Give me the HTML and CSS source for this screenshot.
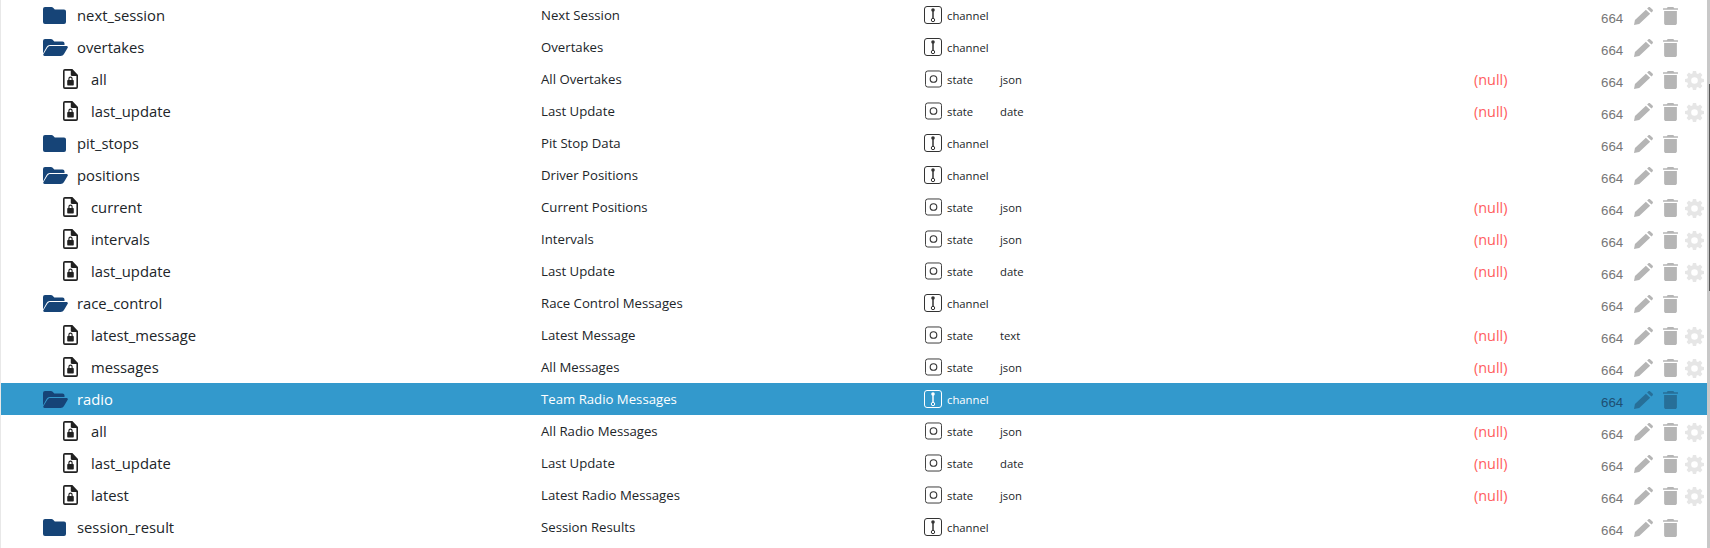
FILE: index.html
```html
<!DOCTYPE html>
<html lang="en">
<head>
  <meta charset="UTF-8" />
  <title>Objects</title>
  <link rel="stylesheet" href="styles.css">
</head>
<body>
  <svg class="defs" width="0" height="0">
    <symbol id="i-folder" viewBox="0 0 23 17"><path d="M2 0h6.500c.5 0 1 .2 1.400.6L11.800 2.500H21A2 2 0 0 1 23 4.500V15A2 2 0 0 1 21 17H2A2 2 0 0 1 0 15V2A2 2 0 0 1 2 0z"/></symbol>
    <symbol id="i-open" viewBox="0 0 25 17"><path d="M0 14.500V2A2 2 0 0 1 2 0h6c.5 0 1 .2 1.400.6L11.300 2.500H19.500A2 2 0 0 1 21.500 4.500V6H7C5.500 6 4.300 6.700 3.600 8z"/><path d="M1.500 17C.5 17-.1 16 .4 15.200L4.500 8.500C5.100 7.600 6 7 7.100 7H23.500C24.500 7 25.200 8 24.700 8.800L21 15C20.300 16.200 19 17 17.600 17z"/></symbol>
    <symbol id="i-file" viewBox="0 0 16 20" preserveAspectRatio="none"><path fill-rule="evenodd" d="M2 0h8l6 6v12a2 2 0 0 1-2 2H2a2 2 0 0 1-2-2V2a2 2 0 0 1 2-2zM2 1.700c-.2 0-.3.100-.3.300v16c0 .2.100.3.300.3h12c.2 0 .3-.1.300-.3V7h-4.800C8.700 7 8.300 6.500 8.300 5.800V1.700z"/><path fill-rule="evenodd" d="M5.700 11V9.800a2.300 2.300 0 0 1 4.600 0V11h.5c.4 0 .7.300.7.700v4c0 .4-.3.700-.7.700H5.200c-.4 0-.7-.3-.7-.7v-4c0-.4.300-.7.700-.7zm1.200 0h2.200V9.800a1.100 1.100 0 0 0-2.200 0z"/></symbol>
    <symbol id="i-channel" viewBox="0 0 18 18"><rect x=".5" y=".5" width="17" height="17" rx="2.500" fill="none" stroke="currentColor"/><circle cx="9" cy="4" r="1.800" fill="currentColor"/><path d="M9 5v7.500" stroke="currentColor" stroke-width="1.500"/><circle cx="9" cy="14" r="1.700" fill="none" stroke="currentColor"/></symbol>
    <symbol id="i-state" viewBox="0 0 18 18"><rect x=".5" y=".5" width="17" height="17" rx="2.500" fill="none" stroke="currentColor"/><circle cx="9" cy="9" r="3.500" fill="none" stroke="currentColor" stroke-width="1.200"/></symbol>
    <symbol id="i-pen" viewBox="0 0 20 20" preserveAspectRatio="none"><path d="M0 20l1-5.500L12.500 3l4.500 4.500L5.500 19zM13.800 1.700L15 .5c.6-.6 1.500-.6 2.100 0l2.400 2.400c.6.600.6 1.500 0 2.100l-1.200 1.200z"/></symbol>
    <symbol id="i-trash" viewBox="0 0 16 20" preserveAspectRatio="none"><path d="M5 0h6l1 1.500h3.500c.3 0 .5.200.5.500v1H0V2c0-.3.200-.5.500-.5H4zM1.200 4.500h13.600V18c0 1.100-.9 2-2 2H3.200c-1.100 0-2-.9-2-2z"/></symbol>
    <symbol id="i-gear" viewBox="0 0 20 20" preserveAspectRatio="none"><path fill-rule="evenodd" d="M8.300 0h3.400l.5 2.600 1.500.6 2.200-1.500 2.400 2.400-1.500 2.200.6 1.500 2.600.5v3.400l-2.600.5-.6 1.500 1.500 2.200-2.400 2.400-2.200-1.500-1.500.6-.5 2.600H8.300l-.5-2.600-1.500-.6-2.200 1.500-2.400-2.400 1.500-2.200-.6-1.500L0 11.700V8.300l2.600-.5.6-1.500-1.500-2.200 2.400-2.400 2.200 1.500 1.500-.6zM10 6.500a3.500 3.500 0 1 0 0 7 3.500 3.500 0 0 0 0-7z"/></symbol>
  </svg>

  <div class="tree">
    <div class="row">
      <div class="name"><svg class="ico-folder"><use href="#i-folder"/></svg>next_session</div>
      <div class="title">Next Session</div>
      <div class="kind"><svg class="ico-type"><use href="#i-channel"/></svg>channel</div>
      <div class="dtype"></div><div class="val"></div><div class="acl">664</div>
      <div class="btns"><svg class="ico-pen"><use href="#i-pen"/></svg><svg class="ico-trash"><use href="#i-trash"/></svg></div>
    </div>
    <div class="row">
      <div class="name"><svg class="ico-open"><use href="#i-open"/></svg>overtakes</div>
      <div class="title">Overtakes</div>
      <div class="kind"><svg class="ico-type"><use href="#i-channel"/></svg>channel</div>
      <div class="dtype"></div><div class="val"></div><div class="acl">664</div>
      <div class="btns"><svg class="ico-pen"><use href="#i-pen"/></svg><svg class="ico-trash"><use href="#i-trash"/></svg></div>
    </div>
    <div class="row state">
      <div class="name"><svg class="ico-file"><use href="#i-file"/></svg>all</div>
      <div class="title">All Overtakes</div>
      <div class="kind"><svg class="ico-type"><use href="#i-state"/></svg>state</div>
      <div class="dtype">json</div><div class="val">(null)</div><div class="acl">664</div>
      <div class="btns"><svg class="ico-pen"><use href="#i-pen"/></svg><svg class="ico-trash"><use href="#i-trash"/></svg><svg class="ico-gear"><use href="#i-gear"/></svg></div>
    </div>
    <div class="row state">
      <div class="name"><svg class="ico-file"><use href="#i-file"/></svg>last_update</div>
      <div class="title">Last Update</div>
      <div class="kind"><svg class="ico-type"><use href="#i-state"/></svg>state</div>
      <div class="dtype">date</div><div class="val">(null)</div><div class="acl">664</div>
      <div class="btns"><svg class="ico-pen"><use href="#i-pen"/></svg><svg class="ico-trash"><use href="#i-trash"/></svg><svg class="ico-gear"><use href="#i-gear"/></svg></div>
    </div>
    <div class="row">
      <div class="name"><svg class="ico-folder"><use href="#i-folder"/></svg>pit_stops</div>
      <div class="title">Pit Stop Data</div>
      <div class="kind"><svg class="ico-type"><use href="#i-channel"/></svg>channel</div>
      <div class="dtype"></div><div class="val"></div><div class="acl">664</div>
      <div class="btns"><svg class="ico-pen"><use href="#i-pen"/></svg><svg class="ico-trash"><use href="#i-trash"/></svg></div>
    </div>
    <div class="row">
      <div class="name"><svg class="ico-open"><use href="#i-open"/></svg>positions</div>
      <div class="title">Driver Positions</div>
      <div class="kind"><svg class="ico-type"><use href="#i-channel"/></svg>channel</div>
      <div class="dtype"></div><div class="val"></div><div class="acl">664</div>
      <div class="btns"><svg class="ico-pen"><use href="#i-pen"/></svg><svg class="ico-trash"><use href="#i-trash"/></svg></div>
    </div>
    <div class="row state">
      <div class="name"><svg class="ico-file"><use href="#i-file"/></svg>current</div>
      <div class="title">Current Positions</div>
      <div class="kind"><svg class="ico-type"><use href="#i-state"/></svg>state</div>
      <div class="dtype">json</div><div class="val">(null)</div><div class="acl">664</div>
      <div class="btns"><svg class="ico-pen"><use href="#i-pen"/></svg><svg class="ico-trash"><use href="#i-trash"/></svg><svg class="ico-gear"><use href="#i-gear"/></svg></div>
    </div>
    <div class="row state">
      <div class="name"><svg class="ico-file"><use href="#i-file"/></svg>intervals</div>
      <div class="title">Intervals</div>
      <div class="kind"><svg class="ico-type"><use href="#i-state"/></svg>state</div>
      <div class="dtype">json</div><div class="val">(null)</div><div class="acl">664</div>
      <div class="btns"><svg class="ico-pen"><use href="#i-pen"/></svg><svg class="ico-trash"><use href="#i-trash"/></svg><svg class="ico-gear"><use href="#i-gear"/></svg></div>
    </div>
    <div class="row state">
      <div class="name"><svg class="ico-file"><use href="#i-file"/></svg>last_update</div>
      <div class="title">Last Update</div>
      <div class="kind"><svg class="ico-type"><use href="#i-state"/></svg>state</div>
      <div class="dtype">date</div><div class="val">(null)</div><div class="acl">664</div>
      <div class="btns"><svg class="ico-pen"><use href="#i-pen"/></svg><svg class="ico-trash"><use href="#i-trash"/></svg><svg class="ico-gear"><use href="#i-gear"/></svg></div>
    </div>
    <div class="row">
      <div class="name"><svg class="ico-open"><use href="#i-open"/></svg>race_control</div>
      <div class="title">Race Control Messages</div>
      <div class="kind"><svg class="ico-type"><use href="#i-channel"/></svg>channel</div>
      <div class="dtype"></div><div class="val"></div><div class="acl">664</div>
      <div class="btns"><svg class="ico-pen"><use href="#i-pen"/></svg><svg class="ico-trash"><use href="#i-trash"/></svg></div>
    </div>
    <div class="row state">
      <div class="name"><svg class="ico-file"><use href="#i-file"/></svg>latest_message</div>
      <div class="title">Latest Message</div>
      <div class="kind"><svg class="ico-type"><use href="#i-state"/></svg>state</div>
      <div class="dtype">text</div><div class="val">(null)</div><div class="acl">664</div>
      <div class="btns"><svg class="ico-pen"><use href="#i-pen"/></svg><svg class="ico-trash"><use href="#i-trash"/></svg><svg class="ico-gear"><use href="#i-gear"/></svg></div>
    </div>
    <div class="row state">
      <div class="name"><svg class="ico-file"><use href="#i-file"/></svg>messages</div>
      <div class="title">All Messages</div>
      <div class="kind"><svg class="ico-type"><use href="#i-state"/></svg>state</div>
      <div class="dtype">json</div><div class="val">(null)</div><div class="acl">664</div>
      <div class="btns"><svg class="ico-pen"><use href="#i-pen"/></svg><svg class="ico-trash"><use href="#i-trash"/></svg><svg class="ico-gear"><use href="#i-gear"/></svg></div>
    </div>
    <div class="row selected">
      <div class="name"><svg class="ico-open"><use href="#i-open"/></svg>radio</div>
      <div class="title">Team Radio Messages</div>
      <div class="kind"><svg class="ico-type"><use href="#i-channel"/></svg>channel</div>
      <div class="dtype"></div><div class="val"></div><div class="acl">664</div>
      <div class="btns"><svg class="ico-pen"><use href="#i-pen"/></svg><svg class="ico-trash"><use href="#i-trash"/></svg></div>
    </div>
    <div class="row state">
      <div class="name"><svg class="ico-file"><use href="#i-file"/></svg>all</div>
      <div class="title">All Radio Messages</div>
      <div class="kind"><svg class="ico-type"><use href="#i-state"/></svg>state</div>
      <div class="dtype">json</div><div class="val">(null)</div><div class="acl">664</div>
      <div class="btns"><svg class="ico-pen"><use href="#i-pen"/></svg><svg class="ico-trash"><use href="#i-trash"/></svg><svg class="ico-gear"><use href="#i-gear"/></svg></div>
    </div>
    <div class="row state">
      <div class="name"><svg class="ico-file"><use href="#i-file"/></svg>last_update</div>
      <div class="title">Last Update</div>
      <div class="kind"><svg class="ico-type"><use href="#i-state"/></svg>state</div>
      <div class="dtype">date</div><div class="val">(null)</div><div class="acl">664</div>
      <div class="btns"><svg class="ico-pen"><use href="#i-pen"/></svg><svg class="ico-trash"><use href="#i-trash"/></svg><svg class="ico-gear"><use href="#i-gear"/></svg></div>
    </div>
    <div class="row state">
      <div class="name"><svg class="ico-file"><use href="#i-file"/></svg>latest</div>
      <div class="title">Latest Radio Messages</div>
      <div class="kind"><svg class="ico-type"><use href="#i-state"/></svg>state</div>
      <div class="dtype">json</div><div class="val">(null)</div><div class="acl">664</div>
      <div class="btns"><svg class="ico-pen"><use href="#i-pen"/></svg><svg class="ico-trash"><use href="#i-trash"/></svg><svg class="ico-gear"><use href="#i-gear"/></svg></div>
    </div>
    <div class="row">
      <div class="name"><svg class="ico-folder"><use href="#i-folder"/></svg>session_result</div>
      <div class="title">Session Results</div>
      <div class="kind"><svg class="ico-type"><use href="#i-channel"/></svg>channel</div>
      <div class="dtype"></div><div class="val"></div><div class="acl">664</div>
      <div class="btns"><svg class="ico-pen"><use href="#i-pen"/></svg><svg class="ico-trash"><use href="#i-trash"/></svg></div>
    </div>
  </div>
  <div class="scrollbar"><div class="thumb"></div></div>
</body>
</html>
```

FILE: styles.css
```css
* {
  box-sizing: border-box;
  margin: 0;
  padding: 0;
}

html, body {
  height: 100%;
  overflow: hidden;
}

body {
  display: flex;
  background: #fff;
  color: #212529;
  font-family: 'Open Sans', sans-serif;
  font-size: 12px;
}

.defs {
  position: absolute;
}

.tree {
  flex: 1;
  margin-top: -1px;
  border-left: 1px solid #e8e8e8;
}

.row {
  display: grid;
  grid-template-columns: 540px 383px 76px 474px 127px 33px auto;
  height: 32px;
  align-items: center;
  white-space: nowrap;
}

.name {
  display: flex;
  align-items: center;
  padding-left: 42px;
  font-size: 14.8px;
  color: #212529;
}

.state .name {
  padding-left: 62px;
}

.ico-folder {
  width: 23px;
  height: 17px;
  margin-right: 11px;
  fill: #164477;
}

.ico-open {
  width: 25px;
  height: 17px;
  margin-right: 9px;
  fill: #164477;
}

.ico-file {
  width: 15px;
  height: 20px;
  margin-right: 13px;
  fill: #212121;
}

.title {
  font-size: 13.2px;
}

.kind {
  display: flex;
  align-items: center;
  font-size: 11.3px;
}

.ico-type {
  width: 18px;
  height: 18px;
  margin-right: 5px;
  color: #333;
}

.state .ico-type {
  margin-left: 1px;
  width: 17px;
}

.dtype {
  font-size: 11.3px;
}

.val {
  font-size: 14.4px;
  color: #ff5c5c;
}

.acl {
  font-family: 'Liberation Sans', sans-serif;
  font-size: 13.3px;
  color: #777;
  padding-top: 6px;
}

.btns {
  display: flex;
  align-items: center;
  padding-top: 2px;
}

.ico-pen {
  width: 19px;
  height: 18px;
  margin-right: 10px;
  fill: #b5b5b5;
}

.ico-trash {
  width: 15px;
  height: 18px;
  margin-right: 7px;
  fill: #b5b5b5;
}

.ico-gear {
  width: 19px;
  height: 19px;
  fill: #e6e6e6;
}

.selected {
  background: #3399cc;
  color: #fff;
}

.selected .name {
  color: #fff;
}

.selected .ico-type {
  color: #fff;
}

.selected .acl {
  color: #1e4f73;
}

.selected .ico-pen, .selected .ico-trash {
  fill: #276f98;
}

.scrollbar {
  width: 3px;
  background: #c8c8c8;
  display: flex;
  flex-direction: column;
  align-items: flex-end;
  padding-top: 84px;
}

.thumb {
  width: 1px;
  height: 207px;
  background: #555;
}
```
